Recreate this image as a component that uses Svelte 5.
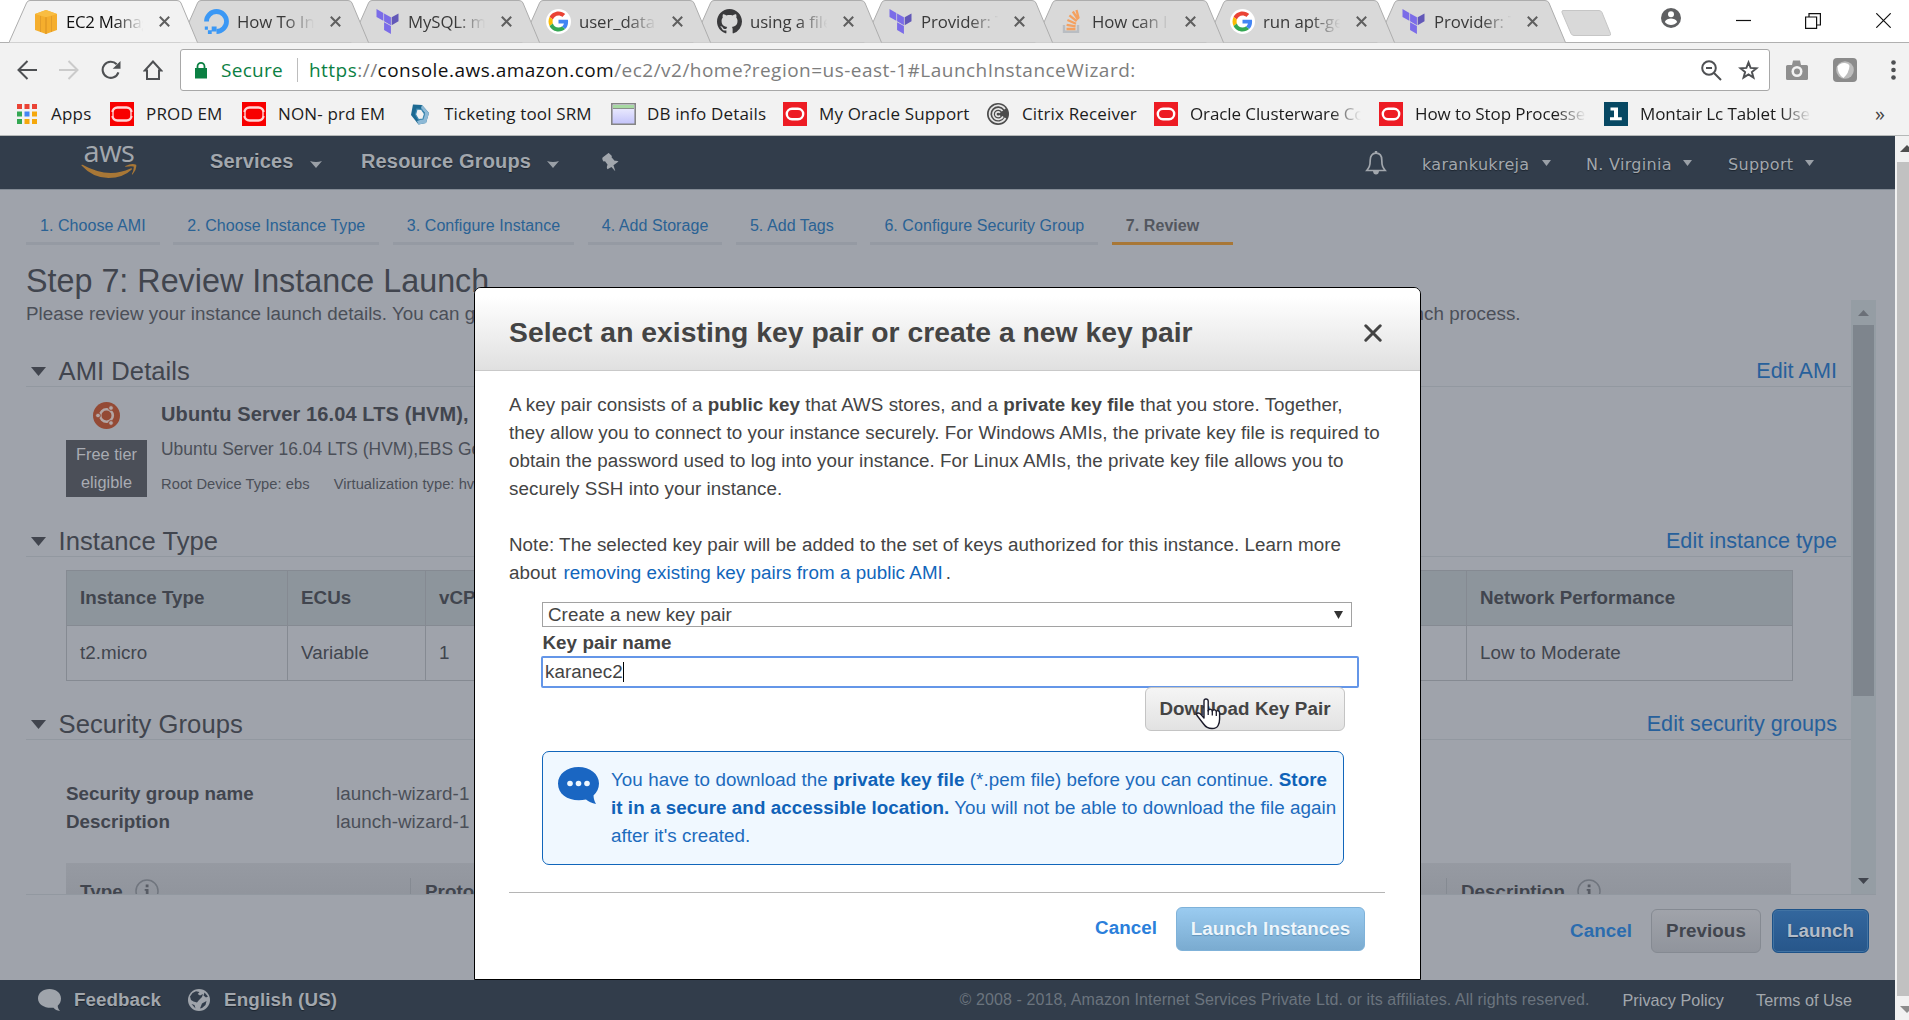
<script>
  const tabs = [
    { icon: 'ec2', title: 'EC2 Management' },
    { icon: 'ocean', title: 'How To Install' },
    { icon: 'terraform', title: 'MySQL: mysql' },
    { icon: 'google', title: 'user_data' },
    { icon: 'github', title: 'using a file' },
    { icon: 'terraform', title: 'Provider: Terraform' },
    { icon: 'stack', title: 'How can I' },
    { icon: 'google', title: 'run apt-get' },
    { icon: 'terraform', title: 'Provider: Terraform' }
  ];
  const bookmarks = [
    { icon: 'oracle', label: 'PROD EM', w: 132 },
    { icon: 'oracle', label: 'NON- prd EM', w: 166 },
    { icon: 'hex', label: 'Ticketing tool SRM', w: 203 },
    { icon: 'window', label: 'DB info Details', w: 172 },
    { icon: 'oracle2', label: 'My Oracle Support', w: 203 },
    { icon: 'citrix', label: 'Citrix Receiver', w: 168 },
    { icon: 'oracle2', label: 'Oracle Clusterware Control', w: 225, fade: true },
    { icon: 'oracle2', label: 'How to Stop Processes', w: 225, fade: true },
    { icon: 'one', label: 'Montair Lc Tablet Uses', w: 225, fade: true }
  ];
  const steps = [
    '1. Choose AMI',
    '2. Choose Instance Type',
    '3. Configure Instance',
    '4. Add Storage',
    '5. Add Tags',
    '6. Configure Security Group',
    '7. Review'
  ];
</script>

{#snippet icon(name)}
  {#if name === 'ec2'}
    <svg width="24" height="26" viewBox="0 0 24 26"><path fill="#f5ae2d" d="M1 5 12 1l11 4v16l-11 4L1 21z" /><path fill="#dd9422" d="M11.4 8h1.200v17h-1.200z" /><path fill="#f9bd42" d="M1 5 12 1l11 4-11 3.200z" /><path stroke="#e39d2a" d="M6.500 7v16M17.500 7v16" /></svg>
  {:else if name === 'ocean'}
    <svg width="25" height="25" viewBox="0 0 25 25"><path fill="none" stroke="#3b98f5" stroke-width="4.800" d="M2.500 12.500a10 10 0 1 1 10 10" /><path fill="#3b98f5" d="M7.700 17.600h4.900v4.900H7.700zM3.900 21.300h3.800V25H3.900zM.8 17.600h3.100v3.200H.8z" /></svg>
  {:else if name === 'terraform'}
    <svg width="25" height="27" viewBox="0 0 24 24"><path fill="#7b6ce8" d="M1.440 0v7.575l6.561 3.790V3.787zM8.720 4.230v7.575l6.561 3.787V8.018zm0 8.405v7.575L15.280 24v-7.578z" /><path fill="#6258b8" d="m22.560 4.227-6.561 3.791v7.574l6.560-3.787z" /></svg>
  {:else if name === 'google'}
    <svg width="25" height="25" viewBox="-6 -6 60 60"><circle cx="24" cy="24" r="30" fill="#fff" /><path fill="#ea4335" d="M24 9.500c3.540 0 6.710 1.220 9.210 3.600l6.850-6.850C35.900 2.380 30.470 0 24 0 14.620 0 6.510 5.380 2.560 13.220l7.980 6.190C12.430 13.720 17.740 9.500 24 9.500z" /><path fill="#4285f4" d="M46.980 24.550c0-1.570-.15-3.090-.38-4.550H24v9.020h12.940c-.58 2.960-2.260 5.480-4.780 7.180l7.730 6c4.510-4.180 7.090-10.360 7.090-17.650z" /><path fill="#fbbc05" d="M10.530 28.590A14.500 14.500 0 0 1 9.770 24c0-1.600.27-3.140.76-4.590l-7.980-6.190A23.900 23.900 0 0 0 0 24c0 3.880.92 7.540 2.560 10.780z" /><path fill="#34a853" d="M24 48c6.480 0 11.930-2.130 15.890-5.810l-7.730-6c-2.150 1.450-4.920 2.300-8.160 2.300-6.260 0-11.570-4.220-13.470-9.910l-7.980 6.190C6.510 42.620 14.620 48 24 48z" /></svg>
  {:else if name === 'github'}
    <svg width="25" height="25" viewBox="0 0 16 16"><path fill="#3a3a3c" d="M8 0C3.580 0 0 3.580 0 8c0 3.540 2.290 6.530 5.470 7.590.4.070.55-.17.55-.38 0-.19-.01-.82-.01-1.490-2.010.37-2.530-.49-2.690-.94-.09-.23-.48-.94-.82-1.130-.28-.15-.68-.52-.01-.53.630-.01 1.080.58 1.230.82.720 1.210 1.870.87 2.330.66.070-.52.280-.87.510-1.070-1.780-.2-3.640-.89-3.640-3.950 0-.87.310-1.590.82-2.150-.08-.2-.36-1.020.08-2.120 0 0 .67-.21 2.200.82.640-.18 1.320-.27 2-.27s1.360.09 2 .27c1.530-1.040 2.200-.82 2.200-.82.440 1.100.16 1.920.08 2.120.51.56.82 1.270.82 2.150 0 3.070-1.870 3.750-3.650 3.950.29.25.54.73.54 1.480 0 1.070-.01 1.930-.01 2.200 0 .21.15.46.55.38A8.010 8.010 0 0 0 16 8c0-4.420-3.580-8-8-8z" /></svg>
  {:else if name === 'stack'}
    <svg width="25" height="25" viewBox="0 0 25 25"><path fill="none" stroke="#b9bdc2" stroke-width="2.400" d="M5 16v6.800h14V16" /><path stroke="#f4a160" stroke-width="2.300" d="M7.500 20h9M7.600 15.800l9 1.600M8.400 11l8.600 3.700M10.400 6.300l7.300 5.900M13.800 2.500l5.300 8M17.500 1l2.200 8.500" /></svg>
  {:else if name === 'oracle'}
    <svg width="24" height="24" viewBox="0 0 24 24"><path fill="#f80000" d="M0 0h24v24H0z" /><rect x="2.500" y="5.500" width="19" height="13" rx="5" fill="#f80000" stroke="#ffd5d5" stroke-width="2.400" /><path stroke="#f80000" stroke-width="1.600" d="M1.500 10v4M22.500 10v4" /></svg>
  {:else if name === 'oracle2'}
    <svg width="24" height="24" viewBox="0 0 24 24"><path fill="#ed1c24" d="M0 0h24v24H0z" /><rect x="3.800" y="6.800" width="16.400" height="10.400" rx="5.200" fill="none" stroke="#fff" stroke-width="2.400" /></svg>
  {:else if name === 'hex'}
    <svg width="24" height="24" viewBox="0 0 24 24"><path fill="#1d6a92" d="M5 2.500 14 3l7 8-3 10-7.500 1.500L3 13z" /><path fill="#8db9d6" d="m14 3 7 8-3 10-7.500 1.500L9 19l6-2 2-6-4-5z" /><path fill="#f2f2f2" d="m9 7 4.500.5 3 4.500-1.500 5-4.500.5-3-5z" /><path fill="none" stroke="#3d8ab3" stroke-width="1.200" d="m9 7 4.500.5 3 4.500-1.500 5-4.500.5-3-5z" /></svg>
  {:else if name === 'window'}
    <svg width="25" height="22" viewBox="0 0 25 22"><defs><linearGradient id="pane" x2="0" y2="1"><stop stop-color="#f4f4ff" /><stop offset="1" stop-color="#c3c3fa" /></linearGradient></defs><path fill="url(#pane)" stroke="#858585" stroke-width="1.600" d="M.8.8h23.400v20.400H.8z" /><path fill="#a7d9a2" d="M2 2h21v3H2z" /><path stroke="#8a8f8a" d="M2 5.500h21" /></svg>
  {:else if name === 'citrix'}
    <svg width="24" height="24" viewBox="0 0 24 24"><circle cx="12" cy="12" r="11" fill="#4c4c4c" /><path fill="none" stroke="#e6e6e6" stroke-width="1.700" d="M19 7a8.500 8.500 0 1 0 .5 9M16.500 9a5.300 5.300 0 1 0 .5 5.500M14 10.800a2.300 2.300 0 1 0 0 2.700" /></svg>
  {:else if name === 'one'}
    <svg width="24" height="24" viewBox="0 0 24 24"><path fill="#074863" d="M0 0h24v24H0z" /><path fill="#fff" d="M6.500 5.500H14v9.800h3.800v3H6v-3h4V8.500H6.500z" /></svg>
  {/if}
{/snippet}

{#snippet caret()}
  <svg class="caret" width="9" height="6" viewBox="0 0 9 6"><path d="M0 0h9L4.500 6z" /></svg>
{/snippet}

{#snippet heading(title, link)}
  <div class="section-head">
    <svg width="15" height="9" viewBox="0 0 15 9"><path fill="#41454e" d="M0 0h15L7.500 9z" /></svg>
    <h2>{title}</h2>
    <a class="edit" href="#edit">{link}</a>
  </div>
{/snippet}

{#snippet info()}
  <svg class="info" width="24" height="24" viewBox="0 0 24 24"><circle cx="12" cy="12" r="11" fill="none" stroke="#70757e" stroke-width="1.500" /><path fill="#585c65" d="M10.700 5.500h2.800v2.800h-2.800zM9.700 10h3.800v8h-2.700v-6.300H9.700z" /></svg>
{/snippet}

<div class="browser">
  <div class="tabstrip">
    {#each tabs as tab, i}
      <div class="tab" class:active={i === 0} style:z-index={20 - i}>
        <svg class="shape" width="190" height="43" viewBox="0 0 190 43"><path d="M0 42.500 17.500 3Q18.500.5 21 .5H168Q171 .5 172 3L188.500 42.500" /></svg>
        <span class="favicon">{@render icon(tab.icon)}</span>
        <span class="tab-title">{tab.title}</span>
        <svg class="tab-close" width="11" height="11" viewBox="0 0 11 11"><path d="m.8.8 9.400 9.400M10.200.8.8 10.200" /></svg>
      </div>
    {/each}
    <svg class="newtab" width="51" height="26" viewBox="0 0 51 26"><path fill="#d9d9d9" stroke="#c6c6c6" d="M2 .5h36q2 0 3 2l8.500 21q.5 2-1 2H13q-2 0-3-2L1 2.500Q.5.5 2 .5z" /></svg>
    <div class="window-controls">
      <svg width="20" height="20" viewBox="0 0 20 20"><circle cx="10" cy="10" r="10" fill="#5f6062" /><circle cx="10" cy="6.300" r="3" fill="#fff" /><path fill="#fff" d="M3.800 14c1-2.600 4-3.400 6.200-3.400s5.200.8 6.200 3.400c-1.600 2-3.800 3-6.200 3s-4.600-1-6.200-3z" /></svg>
      <svg class="min" width="15" height="15" viewBox="0 0 15 15"><path stroke="#111" stroke-width="1.200" d="M0 7.500h15" /></svg>
      <svg class="min" width="16" height="16" viewBox="0 0 16 16"><path fill="none" stroke="#111" stroke-width="1.200" d="M.6 4h11v11.400H.6zM4 4V.6h11.400V12h-3.800" /></svg>
      <svg class="min" width="15" height="15" viewBox="0 0 15 15"><path stroke="#111" stroke-width="1.200" d="m.3.3 14.400 14.400M14.700.3.3 14.700" /></svg>
    </div>
  </div>

  <div class="toolbar">
    <div class="nav-icons">
      <svg width="20" height="20" viewBox="0 0 20 20"><path fill="none" stroke="#4e5053" stroke-width="2" d="M20 10H2M10.500 1 1.500 10l9 9" /></svg>
      <svg width="20" height="20" viewBox="0 0 20 20"><path fill="none" stroke="#cbcbcb" stroke-width="2" d="M0 10h18M9.500 1l9 9-9 9" /></svg>
      <svg width="20" height="20" viewBox="0 0 21 20"><path fill="none" stroke="#4e5053" stroke-width="2.200" d="M18.300 12.500A8.500 8.500 0 1 1 16.500 4" /><path fill="#4e5053" d="M20.500.5v8.200h-8.200z" /></svg>
      <svg width="20" height="20" viewBox="0 0 20 20"><path fill="none" stroke="#4e5053" stroke-width="2" d="M10 1.500 1.800 10.500H4V19h12v-8.500h2.200z" /></svg>
    </div>
    <div class="omnibox">
      <svg class="lock" width="12" height="17" viewBox="0 0 12 17"><path fill="#0b8043" d="M0 6h12v10.500H0z" /><path fill="none" stroke="#0b8043" stroke-width="1.800" d="M2.500 6.500V4.400a3.500 3.500 0 0 1 7 0v2.100" /></svg>
      <span class="secure">Secure</span>
      <span class="divider"></span>
      <span class="url"><span class="green">https</span>://<span class="host">console.aws.amazon.com</span>/ec2/v2/home?region=us-east-1#LaunchInstanceWizard:</span>
      <span class="grow"></span>
      <svg width="21" height="21" viewBox="0 0 21 21"><circle cx="8" cy="8" r="6.800" fill="none" stroke="#4e5053" stroke-width="2" /><path stroke="#4e5053" stroke-width="2" d="m13 13 7 7M5 8h6" /></svg>
      <svg class="star" width="21" height="20" viewBox="0 0 24 23"><path fill="none" stroke="#4e5053" stroke-width="2.200" d="m12 2.800 2.400 6.300 6.800.4-5.300 4.300 1.800 6.500-5.700-3.700-5.700 3.700 1.800-6.500-5.300-4.300 6.800-.4z" /></svg>
    </div>
    <svg class="camera" width="22" height="20" viewBox="0 0 22 20"><path fill="#8f8f8f" d="M1.500 5H6l1-4.500h7L15 5h5.500Q22 5 22 6.500v12q0 1.500-1.500 1.500h-19Q0 20 0 18.500v-12Q0 5 1.500 5z" /><circle cx="11" cy="11.500" r="5.500" fill="#f2f2f2" /><circle cx="11" cy="11.500" r="3" fill="#8f8f8f" /></svg>
    <svg class="ext" width="24" height="24" viewBox="0 0 24 24"><rect width="24" height="24" rx="4" fill="#8b8b8b" /><circle cx="12" cy="12" r="8.800" fill="#bdbdbd" /><path fill="#fff" d="M4.500 8.500Q7 4.500 12 5q4 .5 4.500 3-.5 7-6 12-6-4-6-11.500z" /></svg>
    <svg class="dots" width="5" height="20" viewBox="0 0 5 20"><g fill="#4e5053"><circle cx="2.500" cy="2.500" r="2.300" /><circle cx="2.500" cy="10" r="2.300" /><circle cx="2.500" cy="17.500" r="2.300" /></g></svg>
  </div>

  <div class="bookmarks">
    <div class="bookmark apps">
      <svg width="20" height="20" viewBox="0 0 20 20"><path fill="#ea4335" d="M0 0h5v5H0zM7.500 0h5v5h-5zM15 0h5v5h-5z" /><path fill="#34a853" d="M0 7.500h5v5H0zM0 15h5v5H0z" /><path fill="#4285f4" d="M7.500 7.500h5v5h-5z" /><path fill="#f5a80c" d="M15 7.500h5v5h-5zM7.500 15h5v5h-5zM15 15h5v5h-5z" /></svg>
      <span>Apps</span>
    </div>
    {#each bookmarks as b}
      <div class="bookmark" class:fade={b.fade} style:width="{b.w}px">
        <span class="bm-icon">{@render icon(b.icon)}</span>
        <span class="bm-label">{b.label}</span>
      </div>
    {/each}
    <span class="more">»</span>
  </div>

  <div class="viewport">
    <div class="page">
      <header class="aws-nav">
        <div class="aws-logo">
          <span>aws</span>
          <svg width="56" height="15" viewBox="0 0 56 15"><path fill="#a87736" d="M.5 1.500Q0 .5 1.500.8 27 15 49.500 4.500q2-.6 1.300 1Q42 14 27.500 14 12 14 .5 1.500z" /><path fill="#a87736" d="M44.500 2Q51-1.200 55.200.8q.8 4.700-3.500 9.500-1 .8-.8-.3 2.300-4.700 1.700-7.500-2.600-.7-7.600.2-1.600 0-.5-.7z" /></svg>
        </div>
        <span class="menu services">Services</span>
        <svg class="menu-caret" width="12" height="7" viewBox="0 0 12 7"><path d="M0 0q6 2 12 0L6 7z" /></svg>
        <span class="menu groups">Resource Groups</span>
        <svg class="menu-caret" width="12" height="7" viewBox="0 0 12 7"><path d="M0 0q6 2 12 0L6 7z" /></svg>
        <svg class="pin" width="17" height="18" viewBox="0 0 17 18"><path fill="#a2a7ad" d="m6 0 3.500 3-.3 1.200 3.300 3.300q2.500-.7 4 .5L11.700 12l2.300 6-4.200-4.200L6 16.500q-1.500-2-.2-4.500L3 8.500 1.500 9Q-.5 7 .3 5z" transform="rotate(4 8 9)" /></svg>
        <span class="grow"></span>
        <svg class="bell" width="22" height="24" viewBox="0 0 22 24"><path fill="none" stroke="#a2a7ad" stroke-width="1.700" d="M11 2.200c4 0 5.800 3 5.800 7 0 6 1.200 7.500 3.400 10.300H1.800C4 16.700 5.200 15.200 5.200 9.200c0-4 1.800-7 5.800-7z" /><path fill="#a2a7ad" d="M9.800 0h2.400v2.500H9.800zM8 20h6q-.3 3.500-3 3.500T8 20z" /></svg>
        <span class="acct user">karankukreja</span>{@render caret()}
        <span class="acct region">N. Virginia</span>{@render caret()}
        <span class="acct support">Support</span>{@render caret()}
      </header>

      <main>
        <nav class="steps">
          {#each steps as step, i}
            <span class="step" class:current={i === 6}>{step}</span>
          {/each}
        </nav>
        <h1>Step 7: Review Instance Launch</h1>
        <div class="pane">
          <div class="content">
            <p class="lead">Please review your instance launch details. You can go back to edit changes for each section. Click <b>Launch</b> to assign a key pair to your instance and complete the launch process.</p>

            {@render heading('AMI Details', 'Edit AMI')}
            <div class="ami">
              <div class="ami-badge">
                <svg width="27" height="27" viewBox="0 0 27 27"><circle cx="13.500" cy="13.500" r="13.500" fill="#944a35" /><circle cx="13.500" cy="13.500" r="6.300" fill="none" stroke="#b3a6a5" stroke-width="2.600" /><g fill="#b3a6a5" stroke="#944a35"><circle cx="5" cy="13.500" r="2.400" /><circle cx="18" cy="6" r="2.400" /><circle cx="18" cy="21" r="2.400" /></g></svg>
                <div class="free">Free tier<br />eligible</div>
              </div>
              <div class="ami-text">
                <strong>Ubuntu Server 16.04 LTS (HVM), SSD</strong>
                <p>Ubuntu Server 16.04 LTS (HVM),EBS General</p>
                <small><span>Root Device Type: ebs</span><span>Virtualization type: hvm</span></small>
              </div>
            </div>

            {@render heading('Instance Type', 'Edit instance type')}
            <div class="table">
              <div class="row head"><span>Instance Type</span><span>ECUs</span><span>vCPUs</span><span>Network Performance</span></div>
              <div class="row"><span>t2.micro</span><span>Variable</span><span>1</span><span>Low to Moderate</span></div>
            </div>

            {@render heading('Security Groups', 'Edit security groups')}
            <dl>
              <dt>Security group name</dt><dd>launch-wizard-1</dd>
              <dt>Description</dt><dd>launch-wizard-1</dd>
            </dl>
            <div class="rules">
              <span class="first">Type {@render info()}</span>
              <span>Protocol</span>
              <span>Description {@render info()}</span>
            </div>
          </div>
          <div class="scroll">
            <svg width="11" height="6" viewBox="0 0 11 6"><path fill="#6b7078" d="M5.500 0 11 6H0z" /></svg>
            <div class="thumb"></div>
            <span class="grow"></span>
            <svg class="down" width="11" height="6" viewBox="0 0 11 6"><path fill="#41454e" d="M0 0h11L5.500 6z" /></svg>
          </div>
        </div>
        <div class="page-actions">
          <span class="cancel">Cancel</span>
          <span class="btn previous">Previous</span>
          <span class="btn launch">Launch</span>
        </div>
      </main>

      <footer>
        <svg width="24" height="22" viewBox="0 0 24 22"><path fill="#9fa4ab" d="M11.500 0C18 0 23 4 23 9.500c0 3.200-1.300 5.500-3.300 7.200.1 2 .8 3.700 2.300 5.300-3-.4-5-1.500-6.500-3.300-8.500 1-15.500-3-15.500-9.200C0 4 5 0 11.500 0z" /></svg>
        <span class="foot-bold">Feedback</span>
        <svg class="globe" width="22" height="22" viewBox="0 0 22 22"><circle cx="11" cy="11" r="11" fill="#9fa4ab" /><path fill="#323d4b" d="M2 7.500 4.500 4 8 2.200l3.500.8-1.800 2 2.300 1.500 3-1.500L14 8l-3 3-2 2.500-3.500-1L3 11zM16.500 3.500l3.500 4-2 1-2.500-2zM14 14.500l4.500-2.500-1 4-3.500 3-2 .5zM3.500 15l3 1 1 3.500z" /></svg>
        <span class="foot-bold lang">English (US)</span>
        <span class="grow"></span>
        <span class="copy">© 2008 - 2018, Amazon Internet Services Private Ltd. or its affiliates. All rights reserved.</span>
        <span class="policy">Privacy Policy</span>
        <span class="terms">Terms of Use</span>
      </footer>
    </div>

    <div class="page-scroll">
      <svg width="14" height="7" viewBox="0 0 14 7"><path fill="#4f4f4f" d="M7 0 14 7H0z" /></svg>
      <div class="page-thumb"></div>
      <svg width="14" height="7" viewBox="0 0 14 7"><path fill="#8c8c8c" d="M0 0h14L7 7z" /></svg>
    </div>

    <section class="modal">
      <div class="modal-head">
        <h3>Select an existing key pair or create a new key pair</h3>
        <svg width="18" height="18" viewBox="0 0 18 18"><path stroke="#444" stroke-width="3" stroke-linecap="round" d="m1.800 1.800 14.400 14.400M16.200 1.800 1.800 16.200" /></svg>
      </div>
      <div class="modal-body">
        <p>A key pair consists of a <b>public key</b> that AWS stores, and a <b>private key file</b> that you store. Together,<br />they allow you to connect to your instance securely. For Windows AMIs, the private key file is required to<br />obtain the password used to log into your instance. For Linux AMIs, the private key file allows you to<br />securely SSH into your instance.</p>
        <p class="note">Note: The selected key pair will be added to the set of keys authorized for this instance. Learn more<br />about <a href="#remove">removing existing key pairs from a public AMI</a>.</p>
        <div class="form">
          <div class="select"><span>Create a new key pair</span><svg width="9" height="8" viewBox="0 0 9 8"><path fill="#333" d="M0 0h9L4.500 8z" /></svg></div>
          <div class="label">Key pair name</div>
          <div class="input">karanec2<i></i></div>
          <div class="download">
            <span class="btn">Download Key Pair</span>
            <svg class="pointer" width="26" height="32" viewBox="0 0 26 32"><path fill="#fff" stroke="#1b1b2b" stroke-width="1.400" stroke-linejoin="round" d="M9 20V3Q9 1 11 1t2.200 2v10q.2-1.800 2-1.800t2.100 2q.3-1.500 2-1.500t2 2q.4-1.200 1.800-1 1.500.3 1.500 2.300v6q0 4-1.500 6.500-1.500 3-6 3-5.500 0-8.500-4.500L2 17.500Q1 15.500 2.600 15q1.700-.4 3.400 1.500z" /><path stroke="#1b1b2b" stroke-width="1.300" d="M13.200 12v5M17.300 13v4.500M21.300 14v4" /></svg>
          </div>
          <div class="alert">
            <svg width="41" height="37" viewBox="0 0 41 37"><path fill="#1a66c2" d="M20.500 0C32 0 41 7 41 16.500c0 5-2.200 9-5.500 12 .2 3.500 1 5.500 2.500 8.500-4-.8-7.500-2.600-10-4.500C13 35.500 0 29 0 16.500 0 7 9 0 20.500 0z" /><g fill="#eef7ff"><circle cx="12" cy="16.500" r="2.800" /><circle cx="20.500" cy="16.500" r="2.800" /><circle cx="29" cy="16.500" r="2.800" /></g></svg>
            <p>You have to download the <b>private key file</b> (*.pem file) before you can continue. <b>Store</b><br /><b>it in a secure and accessible location.</b> You will not be able to download the file again<br />after it's created.</p>
          </div>
        </div>
        <div class="modal-actions">
          <span class="cancel">Cancel</span>
          <span class="btn primary">Launch Instances</span>
        </div>
      </div>
    </section>
  </div>
</div>

<style>
  :global(body) { overflow: hidden; }
  .browser, .browser :global(*) { box-sizing: border-box; }
  .browser { width: 100vw; height: 100vh; display: flex; flex-direction: column; font-family: "Liberation Sans", Arial, sans-serif; font-size: 18.800px; letter-spacing: 0.055px; color: #444; background: #f2f2f2; white-space: nowrap; overflow: hidden; }
  p, h1, h2, h3, dl, dd { margin: 0; font-weight: normal; }
  a { text-decoration: none; }
  svg { flex: none; display: block; }
  .grow { flex: 1; }

  .tabstrip { height: 43px; flex: none; display: flex; background: #fff; border-bottom: 1px solid #b0b0b0; padding-left: 9px; }
  .tab { position: relative; width: 188px; height: 43px; margin-right: -17px; flex: none; display: flex; align-items: center; padding: 0 0 0 24px; }
  .shape { position: absolute; left: 0; top: 0; }
  .shape path { fill: #d9d9d9; stroke: #adadad; stroke-width: 1; }
  .active .shape path { fill: #f2f2f2; }
  .favicon { position: relative; width: 25px; display: flex; justify-content: center; }
  .tab-title { position: relative; margin-left: 8px; width: 79px; overflow: hidden; font: 16.800px/26px "Open Sans", sans-serif; letter-spacing: -0.100px; color: #3a3a3a; mask-image: linear-gradient(90deg, #000 60%, transparent 98%); }
  .active .tab-title { color: #111; letter-spacing: -0.300px; }
  .tab-close { position: relative; margin-left: 14px; }
  .tab-close path { stroke: #5f5f5f; stroke-width: 2; }
  .newtab { margin: 10px 0 0 13px; }
  .window-controls { flex: 1; display: grid; grid-template-columns: 75px 69px 71px 15px; padding-left: 49px; height: 36px; align-items: center; }
  .min { margin-top: 5px; }

  .toolbar { height: 54px; flex: none; display: flex; align-items: center; padding-left: 17px; }
  .nav-icons { display: flex; gap: 22px; width: 163px; }
  .omnibox { width: 1590px; height: 42px; display: flex; align-items: center; background: #fff; border: 1px solid #a8a8a8; border-radius: 3px; padding: 0 10px 0 14px; font: 19px/30px "Open Sans", sans-serif; color: #7d7d7d; }
  .secure { color: #0b8043; margin-left: 14px; width: 76px; letter-spacing: 0.300px; }
  .divider { width: 1px; height: 24px; background: #bdbdbd; margin-right: 11px; }
  .url { letter-spacing: 0.470px; }
  .green { color: #0b8043; }
  .host { color: #111; }
  .star { margin-left: 16px; }
  .camera { margin-left: 16px; }
  .ext { margin-left: 25px; }
  .dots { margin-left: 34px; }

  .bookmarks { height: 39px; flex: none; display: flex; align-items: center; padding: 0 0 4px 17px; border-bottom: 1px solid #b5b8b8; font: 17px/26px "Open Sans", sans-serif; color: #1c1c1c; }
  .bookmark { display: flex; align-items: center; flex: none; }
  .apps { width: 93px; gap: 14px; letter-spacing: 0.200px; }
  .bm-icon { width: 24px; display: flex; justify-content: center; margin-right: 12px; flex: none; }
  .bm-label { overflow: hidden; letter-spacing: 0.150px; }
  .fade .bm-label { width: 171px; letter-spacing: -0.100px; mask-image: linear-gradient(90deg, #000 82%, transparent); }
  .more { margin-left: 46px; font-size: 20px; color: #444; }

  .viewport { flex: 1; min-height: 0; position: relative; display: flex; }
  .page { width: 1895px; display: flex; flex-direction: column; background: #9fa3ab; color: #41454e; }
  .aws-nav { height: 54px; flex: none; display: flex; align-items: center; background: #323d4b; border-bottom: 1px solid #828a94; padding-left: 81px; color: #a2a7ad; }
  .aws-logo { width: 56px; height: 54px; display: flex; flex-direction: column; align-items: center; }
  .aws-logo span { font: 500 29px/30px "Open Sans", sans-serif; height: 28px; letter-spacing: -0.500px; }
  .menu { font-size: 20px; font-weight: bold; line-height: 28px; margin-top: -4px; letter-spacing: 0.150px; text-shadow: 0 1px 1px #1c242e; }
  .services { margin-left: 73px; width: 100px; }
  .groups { margin-left: 39px; width: 186px; }
  .menu-caret { margin-top: 3px; }
  .menu-caret path, .caret path { fill: #9aa0a7; }
  .pin { margin-left: 43px; margin-top: -2px; }
  .bell { margin-right: 35px; }
  .acct { font: 16px/24px "DejaVu Sans", sans-serif; letter-spacing: 0.300px; margin-top: 4px; text-shadow: 0 1px 1px #1c242e; }
  .user { width: 120px; }
  .region { margin-left: 35px; width: 97px; }
  .support { margin-left: 36px; width: 77px; }
  .support + .caret { margin-right: 81px; }

  main { flex: 1; padding: 22px 19px 0 26px; display: flex; flex-direction: column; min-height: 0; }
  .steps { display: flex; gap: 13.500px; height: 33px; flex: none; }
  .step { font-size: 16px; letter-spacing: 0.060px; line-height: 28px; padding: 0 14px; min-width: 121px; border-bottom: 3px solid #959aa3; color: #2a6294; }
  .current { font-weight: bold; color: #53575f; border-color: #a87736; }
  h1 { font-size: 32.300px; letter-spacing: 0; line-height: 40px; margin-top: 16px; height: 39px; flex: none; }
  .pane { height: 595px; flex: none; display: flex; overflow: hidden; border-bottom: 1px solid #9298a0; }
  .content { width: 1825px; }
  .lead { line-height: 24px; letter-spacing: 0.045px; margin-top: 2px; color: #4b4f58; }
  .lead b { font-weight: bold; }
  .section-head { display: flex; align-items: center; height: 33px; border-bottom: 1px solid #9298a0; padding: 2px 14px 0 5px; }
  .lead + .section-head { margin-top: 28px; }
  h2 { font-size: 25.600px; line-height: 31px; margin-left: 12.500px; flex: 1; }
  .edit { font-size: 21.550px; color: #27609b; }
  .ami { height: 137px; display: flex; padding: 13px 0 0 40px; }
  .ami-badge { width: 81px; margin-right: 14px; display: flex; flex-direction: column; align-items: center; padding-top: 2px; }
  .free { width: 81px; height: 57px; margin-top: 11px; background: #4b4f58; color: #a9acb3; font-size: 16.300px; line-height: 28px; text-align: center; }
  .ami-text { display: flex; flex-direction: column; gap: 7px; line-height: 28px; }
  .ami-text strong { font-size: 20px; letter-spacing: 0.120px; }
  .ami-text p { font-size: 17.450px; letter-spacing: 0.020px; color: #4b4f58; }
  .ami-text small { font-size: 14.700px; color: #4b4f58; display: flex; gap: 24px; }
  .table { margin: 13px 0 26px 40px; width: 1727px; border: 1px solid #858a92; }
  .row { display: grid; grid-template-columns: 221px 138px 1041px 1fr; height: 55px; line-height: 54px; }
  .head { font-weight: bold; background: #8d959c; border-bottom: 1px solid #858a92; height: 55px; }
  .row:last-child { height: 54px; }
  .row span { padding-left: 13px; border-right: 1px solid #858a92; }
  .row span:last-child { border: 0; }
  dl { display: grid; grid-template-columns: 270px 1fr; line-height: 28px; padding: 40px 0 27px 40px; }
  dt { font-weight: bold; }
  dd { color: #4b4f58; }
  .rules { margin-left: 40px; width: 1725px; height: 60px; background: linear-gradient(#969aa2, #8c9098 60px); display: grid; grid-template-columns: 344px 1036px 1fr; padding-top: 15px; font-weight: bold; }
  .rules span { display: flex; gap: 12px; align-items: flex-start; line-height: 27px; padding-left: 14px; border-left: 1px solid #858a92; }
  .rules .first { border: 0; padding-left: 14px; }
  .info { margin-top: 1px; }
  .scroll { width: 25px; background: #959da4; display: flex; flex-direction: column; align-items: center; padding: 10px 0 10px; }
  .thumb { width: 21px; height: 371px; margin-top: 9px; background: #7e858d; }
  .page-actions { display: flex; justify-content: flex-end; align-items: center; padding: 14px 7px 0 0; font-weight: bold; }
  .btn { height: 44px; line-height: 41px; border: 1px solid #858a92; border-radius: 6px; font-weight: bold; text-align: center; }
  .page-actions .cancel { color: #2b6cae; margin-right: 19px; }
  .previous { width: 110px; margin-right: 11px; background: linear-gradient(#a0a3aa, #90949c); }
  .launch { width: 97px; color: #b4bdc9; background: linear-gradient(#33679e, #27568a); border-color: #1d5288; box-shadow: inset 0 0 0 1px #4173a3; text-shadow: 0 1px 1px #1c3a5c; }

  footer { height: 40px; flex: none; display: flex; align-items: center; background: #323d4b; padding: 0 43px 0 38px; color: #a2a7ad; }
  .foot-bold { font-weight: bold; margin-left: 12px; text-shadow: 0 1px 1px #1c242e; }
  .globe { margin-left: 27px; }
  .lang { margin-left: 14px; letter-spacing: 0.120px; }
  .copy { font-size: 16px; letter-spacing: 0.100px; color: #6b747e; }
  .policy { font-size: 16.200px; margin-left: 33px; }
  .terms { font-size: 16.200px; margin-left: 32px; }

  .page-scroll { width: 14px; background: #f1f1f1; overflow: hidden; display: flex; flex-direction: column; padding: 9px 0 0 5px; }
  .page-thumb { width: 12px; height: 834px; margin: 10px 0 10px -3px; flex: none; background: #c1c1c1; }

  .modal { position: absolute; left: 474px; top: 151px; width: 947px; height: 693px; background: #fff; border: 1px solid #000; border-radius: 7px 7px 0 0; overflow: hidden; }
  .modal-head { height: 83px; display: flex; align-items: center; justify-content: space-between; padding: 6px 38px 0 34px; background: linear-gradient(#fff 10%, #e0e0e0); border-bottom: 1px solid #c9c9c9; }
  .modal-head svg { margin-top: 2px; }
  h3 { font-size: 28.300px; letter-spacing: 0.020px; font-weight: bold; line-height: 36px; }
  .modal-body { padding: 20px 35px 0 34px; line-height: 28px; }
  .note { margin-top: 28px; }
  .note a { color: #1166bb; margin: 0 3px 0 2px; }
  .form { padding-left: 33px; margin-top: 15px; }
  .select { width: 810px; height: 25px; line-height: 24px; border: 1px solid #a2a2a2; display: flex; align-items: center; justify-content: space-between; padding: 0 8px 0 5px; }
  .label { font-weight: bold; height: 29px; line-height: 31px; padding-left: 0.500px; }
  .input { width: 818px; height: 32px; margin-left: -1px; border: 2px solid #6496e8; border-radius: 2px; line-height: 27px; padding: 0 0 1px 2px; display: flex; align-items: center; }
  .input i { width: 1px; height: 20px; background: #000; }
  .download { position: relative; width: 803px; display: flex; justify-content: flex-end; margin-top: -1px; }
  .download .btn { width: 200px; border-color: #c4c4c4; background: linear-gradient(#f5f5f5, #e2e2e2); }
  .pointer { position: absolute; left: 653px; top: 11px; }
  .alert { width: 802px; height: 114px; margin-top: 20px; border: 1px solid #1166bb; border-radius: 7px; background: #f0f8ff; color: #1c6bbd; display: flex; padding: 14px 0 0 15px; }
  .alert svg { margin-top: 1px; }
  .alert p { margin-left: 12px; }
  .alert b { color: #0f62b8; }
  .modal-actions { margin-top: 27px; width: 876px; border-top: 1px solid #b5b5b5; padding: 14px 20px 0 0; display: flex; justify-content: flex-end; }
  .modal-actions .cancel { color: #2b7fdb; font-weight: bold; line-height: 42px; margin-right: 19px; }
  .primary { width: 189px; line-height: 41px; color: #eef6fc; background: linear-gradient(#9acbf0, #7aabd0); border-color: #7fb2d9; text-shadow: 0 1px 1px #6294bb; }
</style>
